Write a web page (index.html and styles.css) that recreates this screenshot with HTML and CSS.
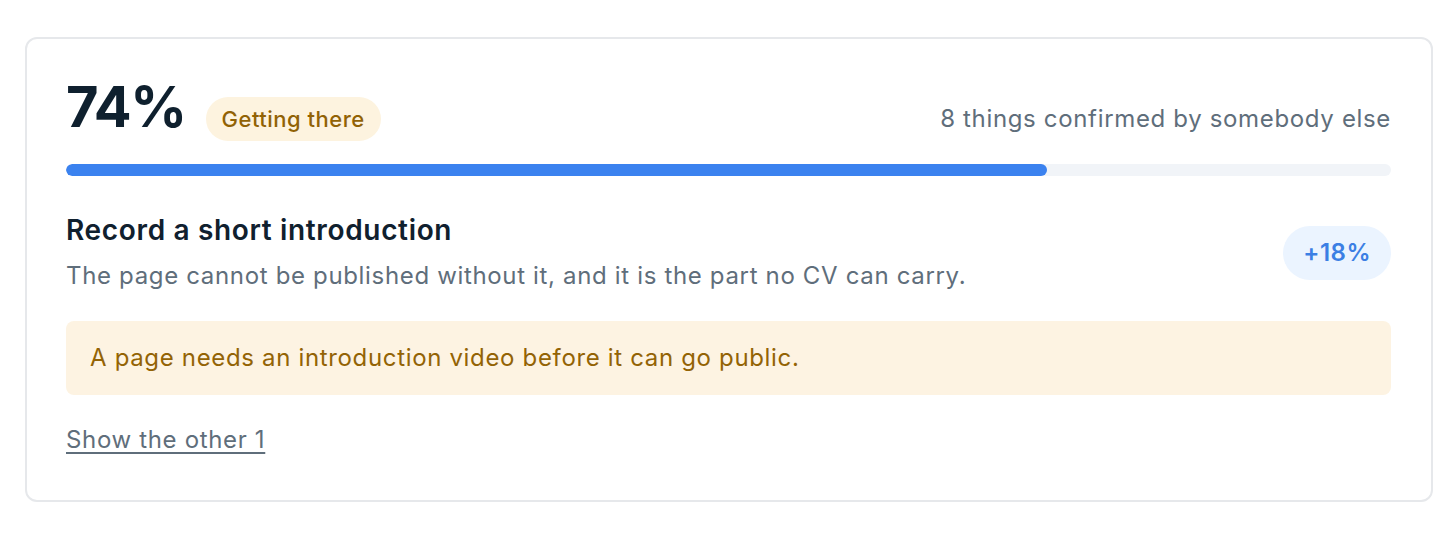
FILE: index.html
```html
<!DOCTYPE html>
<html lang="en">
<head>
<meta charset="utf-8">
<title>Profile completeness</title>
<link rel="stylesheet" href="styles.css">
</head>
<body>
  <section class="card">
    <div class="card-head">
      <span class="score">74%</span>
      <span class="status">Getting there</span>
      <span class="confirmed">8 things confirmed by somebody else</span>
    </div>
    <div class="progress"><div class="progress-fill" style="width: 74%"></div></div>
    <div class="task">
      <div class="task-text">
        <h3 class="task-title">Record a short introduction</h3>
        <p class="task-desc">The page cannot be published without it, and it is the part no CV can carry.</p>
      </div>
      <span class="gain">+18%</span>
    </div>
    <div class="notice">A page needs an introduction video before it can go public.</div>
    <a class="more" href="#">Show the other 1</a>
  </section>
</body>
</html>
```

FILE: styles.css
```css
* { box-sizing: border-box; }

html, body {
  margin: 0;
  background: #ffffff;
}

body {
  font-family: Inter, "Noto Sans", "Liberation Sans", sans-serif;
  color: #5f6e7b;
  letter-spacing: 0.66px;
  padding: 37px 0 0 25px;
}

.card {
  width: 1408px;
  border: 2px solid #e6e8eb;
  border-radius: 12px;
  padding: 40px 40px 42px 39px;
  background: #fff;
}

.card-head {
  display: flex;
  align-items: baseline;
  gap: 20px;
}

.score {
  font-size: 56px;
  line-height: 1;
  font-weight: 700;
  color: #0f202e;
  letter-spacing: -1.5px;
}

.status {
  background: #fdf3df;
  color: #916205;
  font-size: 22px;
  line-height: 28px;
  font-weight: 500;
  letter-spacing: 0.5px;
  padding: 8px 16px;
  border-radius: 22px;
}

.confirmed {
  margin-left: auto;
  font-size: 24px;
  line-height: 36px;
  color: #5f6e7b;
}

.progress {
  margin-top: 23px;
  height: 12px;
  border-radius: 6px;
  background: #f1f4f8;
  overflow: hidden;
}

.progress-fill {
  height: 100%;
  border-radius: 6px;
  background: #3b82ef;
}

.task {
  margin-top: 36px;
  display: flex;
  align-items: center;
  justify-content: space-between;
  gap: 24px;
}

.task-title {
  margin: 0;
  font-size: 28px;
  line-height: 36px;
  font-weight: 600;
  color: #10202e;
}

.task-desc {
  margin: 10px 0 0;
  font-size: 24px;
  line-height: 36px;
  color: #5f6e7b;
}

.gain {
  background: #ebf4ff;
  color: #3b7fe4;
  font-size: 24px;
  line-height: 34px;
  font-weight: 600;
  letter-spacing: 0.5px;
  padding: 10px 20px 10px 20px;
  border-radius: 27px;
}

.notice {
  margin-top: 27px;
  background: #fdf3e2;
  color: #936305;
  font-size: 24px;
  line-height: 34px;
  padding: 20px 24px;
  border-radius: 8px;
}

.more {
  display: inline-block;
  margin-top: 27px;
  font-size: 24px;
  line-height: 36px;
  color: #5f6e7b;
  text-decoration: underline;
  text-underline-offset: 4px;
  text-decoration-thickness: 2px;
}
```
